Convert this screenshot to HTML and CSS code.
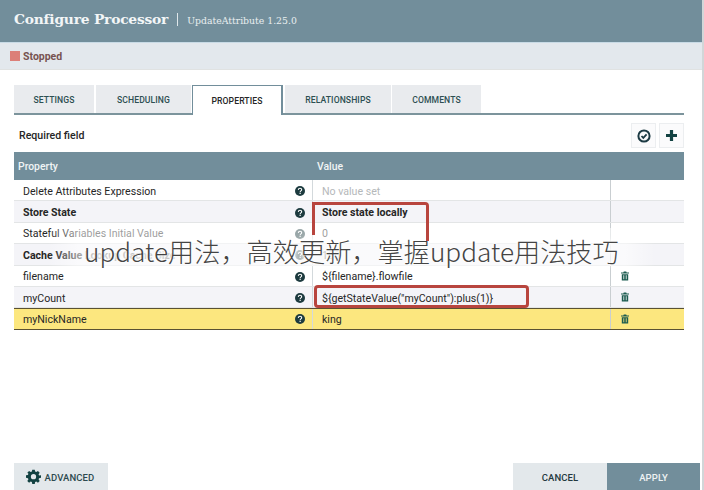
FILE: index.html
```html
<!DOCTYPE html>
<html lang="zh">
<head>
<meta charset="utf-8">
<title>Configure Processor</title>
<link rel="stylesheet" href="styles.css">
</head>
<body>
<div class="dialog">
  <header class="header">
    <h1 class="title">Configure Processor</h1>
    <span class="divider"></span>
    <span class="subtitle">UpdateAttribute 1.25.0</span>
  </header>
  <div class="status"><span class="status-box"></span><span class="status-text">Stopped</span></div>
  <main class="content">
    <nav class="tabs">
      <div class="tab tab-first">SETTINGS</div>
      <div class="tab tab-sched">SCHEDULING</div>
      <div class="tab tab-active">PROPERTIES</div>
      <div class="tab tab-rel">RELATIONSHIPS</div>
      <div class="tab tab-com">COMMENTS</div>
    </nav>
    <div class="toolbar">
      <span class="required">Required field</span>
      <div class="tools">
        <div class="tool"><svg width="14" height="14" viewBox="0 0 14 14"><circle cx="7" cy="7" r="5.600" fill="none" stroke="#1d3b44" stroke-width="2"/><path d="M4.500 7l1.800 1.900 3.300-3.500" fill="none" stroke="#1d3b44" stroke-width="1.800"/></svg></div>
        <div class="tool"><svg width="13" height="13" viewBox="0 0 13 13"><path d="M6.500 1v11M1 6.500h11" stroke="#124242" stroke-width="3.200"/></svg></div>
      </div>
    </div>
    <div class="table">
      <div class="row head"><div class="c-prop">Property</div><div class="c-val">Value</div></div>
      <div class="row"><div class="c-prop"><span>Delete Attributes Expression</span><svg class="help"><use href="#q"/></svg></div><div class="c-val muted">No value set</div><div class="c-act"></div></div>
      <div class="row alt bold"><div class="c-prop"><span>Store State</span><svg class="help"><use href="#q"/></svg></div><div class="c-val">Store state locally</div><div class="c-act"></div></div>
      <div class="row"><div class="c-prop"><span>Stateful Variables Initial Value</span><svg class="help"><use href="#q"/></svg></div><div class="c-val">0</div><div class="c-act"></div></div>
      <div class="row alt bold"><div class="c-prop"><span>Cache Value Lookup Cache Size</span><svg class="help"><use href="#q"/></svg></div><div class="c-val plain">100</div><div class="c-act"></div></div>
      <div class="row"><div class="c-prop"><span>filename</span><svg class="help"><use href="#q"/></svg></div><div class="c-val">${filename}.flowfile</div><div class="c-act"><svg class="trash"><use href="#t"/></svg></div></div>
      <div class="row alt"><div class="c-prop"><span>myCount</span><svg class="help"><use href="#q"/></svg></div><div class="c-val">${getStateValue("myCount"):plus(1)}</div><div class="c-act"><svg class="trash"><use href="#t"/></svg></div></div>
      <div class="row selected"><div class="c-prop"><span>myNickName</span><svg class="help"><use href="#q"/></svg></div><div class="c-val">king</div><div class="c-act"><svg class="trash"><use href="#t"/></svg></div></div>
    </div>
    <div class="actions">
      <div class="btn btn-adv"><svg width="15" height="15" viewBox="0 0 24 24"><path fill="#124242" fill-rule="evenodd" d="M10 1h4l.6 3.100 1.900.8L19.100 3.100l2.800 2.800-1.800 2.600.8 1.900L24 10v4l-3.100.6-.8 1.900 1.800 2.600-2.800 2.800-2.600-1.800-1.900.8L14 24h-4l-.6-3.100-1.900-.8-2.600 1.800-2.800-2.800 1.800-2.600-.8-1.900L0 14v-4l3.100-.6.8-1.900L2.100 5.900l2.800-2.800 2.600 1.800 1.900-.8zM12 8a4.200 4.200 0 1 0 0 8.400A4.200 4.200 0 0 0 12 8z"/></svg><span>ADVANCED</span></div>
      <div class="btn-group">
        <div class="btn btn-cancel">CANCEL</div>
        <div class="btn btn-apply">APPLY</div>
      </div>
    </div>
  </main>
  <div class="mark mark-state"></div>
  <div class="mark mark-count"></div>
  <div class="caption">update用法，高效更新，掌握update用法技巧</div>
</div>
<svg class="defs" width="0" height="0">
  <symbol id="q" viewBox="0 0 10 10"><circle cx="5" cy="5" r="5" fill="#1d3b3f"/><path d="M3.300 3.900C3.400 2.800 4.100 2.300 5 2.300c1 0 1.700.6 1.700 1.400 0 1.200-1.500 1.200-1.500 2.300" fill="none" stroke="#fff" stroke-width="1.100"/><rect x="4.500" y="6.700" width="1.300" height="1.200" fill="#fff"/></symbol>
  <symbol id="t" viewBox="0 0 10 11"><path fill="#1c5c50" fill-rule="evenodd" d="M3.500 0h3l.6 1.200H10v1.300H0V1.200h2.900zM1 3.200h8V11H1zM3 4.500v5h1v-5zm3 0v5h1v-5z"/></symbol>
</svg>
</body>
</html>
```
FILE: styles.css
```css
* { box-sizing: border-box; }
html, body { margin: 0; padding: 0; }
body { width: 704px; height: 490px; overflow: hidden; background: #fff; font-family: Roboto, "Noto Sans", sans-serif; color: #262626; }
.dialog { position: relative; width: 704px; height: 490px; border-right: 2px solid #d2d6d8; display: flex; flex-direction: column; overflow: hidden; }
.header { height: 43px; background: #728e9b; border-bottom: 1px solid #c9dbe6; display: flex; align-items: baseline; padding: 11px 0 0 14px; flex: none; }
.title { margin: 0; font: 700 13.8px/16px "DejaVu Serif", "Liberation Serif", serif; letter-spacing: -.2px; color: #f3f6f7; }
.divider { width: 1px; height: 13px; background: #dfe7ea; margin: 2px 9px 0 9px; align-self: flex-start; }
.subtitle { font: 400 9.3px/16px "DejaVu Serif", "Liberation Serif", serif; color: #e9eef0; }
.status { height: 27px; background: #e3e8ed; border-bottom: 1px solid #e0e2e2; display: flex; align-items: center; padding: 0 0 0 10px; flex: none; }
.status-box { width: 10px; height: 10px; background: #dc7f78; margin-right: 3px; }
.status-text { font-size: 10.5px; font-weight: 700; color: #775351; }
.content { flex: 1; display: flex; flex-direction: column; padding: 15px 18px 0 14px; min-height: 0; }
.tabs { height: 30px; display: flex; border-bottom: 2px solid #7c949c; flex: none; }
.tab { height: 28px; display: flex; align-items: center; justify-content: center; padding-top: 2px; background: #e9ebee; font-size: 8.6px; font-weight: 500; color: #2d4f52; letter-spacing: .1px; margin-right: 2px; flex: none; }
.tab-first { width: 80px; }
.tab-sched { width: 95px; }
.tab-active { width: 91px; height: 30px; background: #fff; border: 1px solid #728e9b; border-bottom: 0; border-right-width: 2px; color: #262626; margin-left: -1px; padding-top: 1px; padding-bottom: 1px; }
.tab-rel { width: 106px; margin-right: 1px; }
.tab-com { width: 89px; }
.toolbar { height: 37px; display: flex; align-items: center; justify-content: space-between; padding: 4px 0 0 5px; flex: none; }
.required { font-size: 10.6px; font-weight: 500; color: #262626; }
.tools { display: flex; gap: 3px; }
.tool { width: 25px; height: 25px; background: #fbfbfc; border: 1px solid #eceef0; display: flex; align-items: center; justify-content: center; }
.table { flex: none; }
.row { height: 21.4px; display: flex; align-items: center; font-size: 10.6px; color: #262626; border-bottom: 1px solid #e3e5e6; background: #fff; }
.row.alt { background: #f4f4f8; }
.row.bold { font-weight: 700; }
.row.head { height: 28px; background: #728e9b; color: #f0f4f5; font-weight: 500; font-size: 10.4px; border: 0; }
.row.head .c-prop { padding: 0 0 0 4px; }
.row.head .c-val { border: 0; padding: 0 0 0 5px; }
.c-prop { width: 298px; height: 100%; display: flex; align-items: center; justify-content: space-between; padding: 2px 7px 0 9px; flex: none; }
.c-val { width: 298px; height: 100%; display: flex; align-items: center; padding: 2px 0 0 9px; border-left: 1px solid #d3d9dc; flex: none; }
.c-act { flex: 1; height: 100%; display: flex; align-items: center; padding-left: 10px; border-left: 1px solid #c9ced1; }
.muted { color: #b5b8ba; }
.plain { font-weight: 400; }
.row.selected { background: #fce77f; border-top: 1px solid #5a5132; border-bottom: 1px solid #5a5132; height: 22px; }
.row.selected .c-prop, .row.selected .c-val { padding-top: 0; }
.help { width: 10px; height: 10px; }
.trash { width: 8px; height: 10px; }
.actions { margin-top: auto; height: 27px; display: flex; justify-content: space-between; margin-right: -16px; flex: none; }
.btn { height: 27px; display: flex; align-items: center; justify-content: center; padding-top: 2px; font-size: 9.5px; font-weight: 500; letter-spacing: .1px; }
.btn-adv { width: 94px; background: #e3e8eb; color: #2d4a4f; gap: 4px; padding-right: 2px; }
.btn-adv svg { margin-top: -2px; }
.btn-group { display: flex; }
.btn-cancel { width: 94px; background: #e3e8eb; color: #23393e; }
.btn-apply { width: 93px; background: #728e9b; color: #eef2f3; }
.mark { position: absolute; z-index: 2; border: 3px solid #b8453e; }
.mark-state { left: 312px; top: 202px; width: 117px; height: 39px; border-left: 0; border-bottom: 0; border-top-right-radius: 4px; }
.mark-state::before { content: ""; position: absolute; left: 0; top: -3px; width: 3px; height: 33px; background: #b8453e; border-top-left-radius: 3px; }
.mark-count { left: 314px; top: 285px; width: 215px; height: 23px; border-radius: 4px; }
.caption { position: absolute; z-index: 1; left: 84px; top: 235px; font: 300 26.2px/32px "Noto Sans CJK SC", "Noto Sans", sans-serif; color: #444; white-space: nowrap; text-shadow: 0 0 2px #fff, 0 0 3px #fff, 0 0 4px #fff, 0 0 6px #fff, 0 0 8px #fff; }
.caption::before { content: ""; position: absolute; z-index: -1; left: -36px; right: -36px; top: -7px; bottom: 1px; background: linear-gradient(to right, transparent, rgba(255,255,255,.55) 30px, rgba(255,255,255,.55) calc(100% - 30px), transparent); }
.defs { position: absolute; }
```
